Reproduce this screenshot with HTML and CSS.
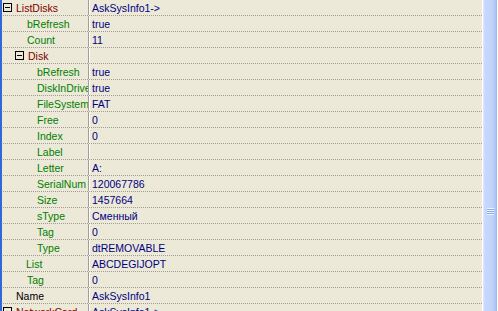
FILE: index.html
```html
<!DOCTYPE html>
<html lang="en">

<head>
    <meta charset="UTF-8">
    <title>Inspector</title>
    <link rel="stylesheet" href="styles.css">
</head>

<body>
    <div class="inspector">
        <div class="edge"></div>
        <div class="grid">
            <div class="row"><div class="name lv0 obj"><span class="box"></span>ListDisks</div><div class="val">AskSysInfo1-&gt;</div></div>
            <div class="row"><div class="name lv1">bRefresh</div><div class="val">true</div></div>
            <div class="row"><div class="name lv1">Count</div><div class="val">11</div></div>
            <div class="row"><div class="name lv1 obj"><span class="box"></span>Disk</div><div class="val"></div></div>
            <div class="row"><div class="name lv2">bRefresh</div><div class="val">true</div></div>
            <div class="row"><div class="name lv2">DiskInDrive</div><div class="val">true</div></div>
            <div class="row"><div class="name lv2">FileSystem</div><div class="val">FAT</div></div>
            <div class="row"><div class="name lv2">Free</div><div class="val">0</div></div>
            <div class="row"><div class="name lv2">Index</div><div class="val">0</div></div>
            <div class="row"><div class="name lv2">Label</div><div class="val"></div></div>
            <div class="row"><div class="name lv2">Letter</div><div class="val">A:</div></div>
            <div class="row"><div class="name lv2">SerialNum</div><div class="val">120067786</div></div>
            <div class="row"><div class="name lv2">Size</div><div class="val">1457664</div></div>
            <div class="row"><div class="name lv2">sType</div><div class="val">Сменный</div></div>
            <div class="row"><div class="name lv2">Tag</div><div class="val">0</div></div>
            <div class="row"><div class="name lv2">Type</div><div class="val">dtREMOVABLE</div></div>
            <div class="row"><div class="name lv1 list">List</div><div class="val">ABCDEGIJOPT</div></div>
            <div class="row"><div class="name lv1">Tag</div><div class="val">0</div></div>
            <div class="row"><div class="name lv0 plain">Name</div><div class="val">AskSysInfo1</div></div>
            <div class="row"><div class="name lv0 obj"><span class="box"></span>NetworkCard</div><div class="val">AskSysInfo1-&gt;</div></div>
        </div>
        <div class="scroll">
            <div class="thumb">
                <span class="grip"></span>
            </div>
        </div>
    </div>
</body>

</html>
```

FILE: styles.css
```css
* {
    margin: 0;
    padding: 0;
    box-sizing: border-box;
}

body {
    width: 498px;
    height: 311px;
    overflow: hidden;
    background: #ece9d8;
    font-family: "Liberation Sans", Arial, sans-serif;
    font-size: 10.5px;
}

.inspector {
    display: flex;
    height: 311px;
}

.edge {
    width: 2px;
    background: #3168d5;
}

.grid {
    flex: 1;
    padding-left: 1px;
    overflow: hidden;
}

.row {
    display: flex;
    height: 16px;
    line-height: 15px;
    border-bottom: 1px dotted #9e9c94;
}

.name {
    display: flex;
    align-items: center;
    width: 86px;
    flex: none;
    padding-top: 1px;
    white-space: nowrap;
    overflow: hidden;
    color: #008000;
    border-right: 1px solid #a09e96;
    box-shadow: 1px 0 0 #ffffff;
}

.name.obj {
    color: #800000;
}

.name.plain {
    color: #000000;
}

.lv0 {
    padding-left: 13px;
}

.lv1 {
    padding-left: 24px;
}

.lv1.list {
    padding-left: 23px;
}

.lv2 {
    padding-left: 34px;
}

.name.obj.lv0 {
    padding-left: 0;
}

.name.obj.lv1 {
    padding-left: 12px;
}

.box {
    position: relative;
    width: 9px;
    height: 9px;
    margin-right: 4px;
    margin-top: -1px;
    border: 1px solid #000000;
    flex: none;
}

.box::after {
    content: "";
    position: absolute;
    left: 1px;
    top: 3px;
    width: 5px;
    height: 1px;
    background: #000000;
}

.val {
    flex: 1;
    padding-left: 3px;
    padding-top: 1px;
    color: #000080;
    white-space: nowrap;
}

.scroll {
    width: 16px;
    border-left: 1px solid #ffffff;
    background: #f4f3ee;
    display: flex;
}

.thumb {
    flex: 1;
    display: flex;
    justify-content: center;
    align-items: flex-start;
    padding-top: 208px;
    border-right: 1px solid #ffffff;
    background: linear-gradient(to right, #e1eafe 0, #c8d6fc 2px, #c1d3fb 9px, #b4c8f6 12px, #9cb4ec 14px);
}

.grip {
    display: block;
    width: 7px;
    height: 7px;
    background: repeating-linear-gradient(to bottom, #eef4fe 0, #eef4fe 1px, #8cabea 1px, #8cabea 2px);
}
```
